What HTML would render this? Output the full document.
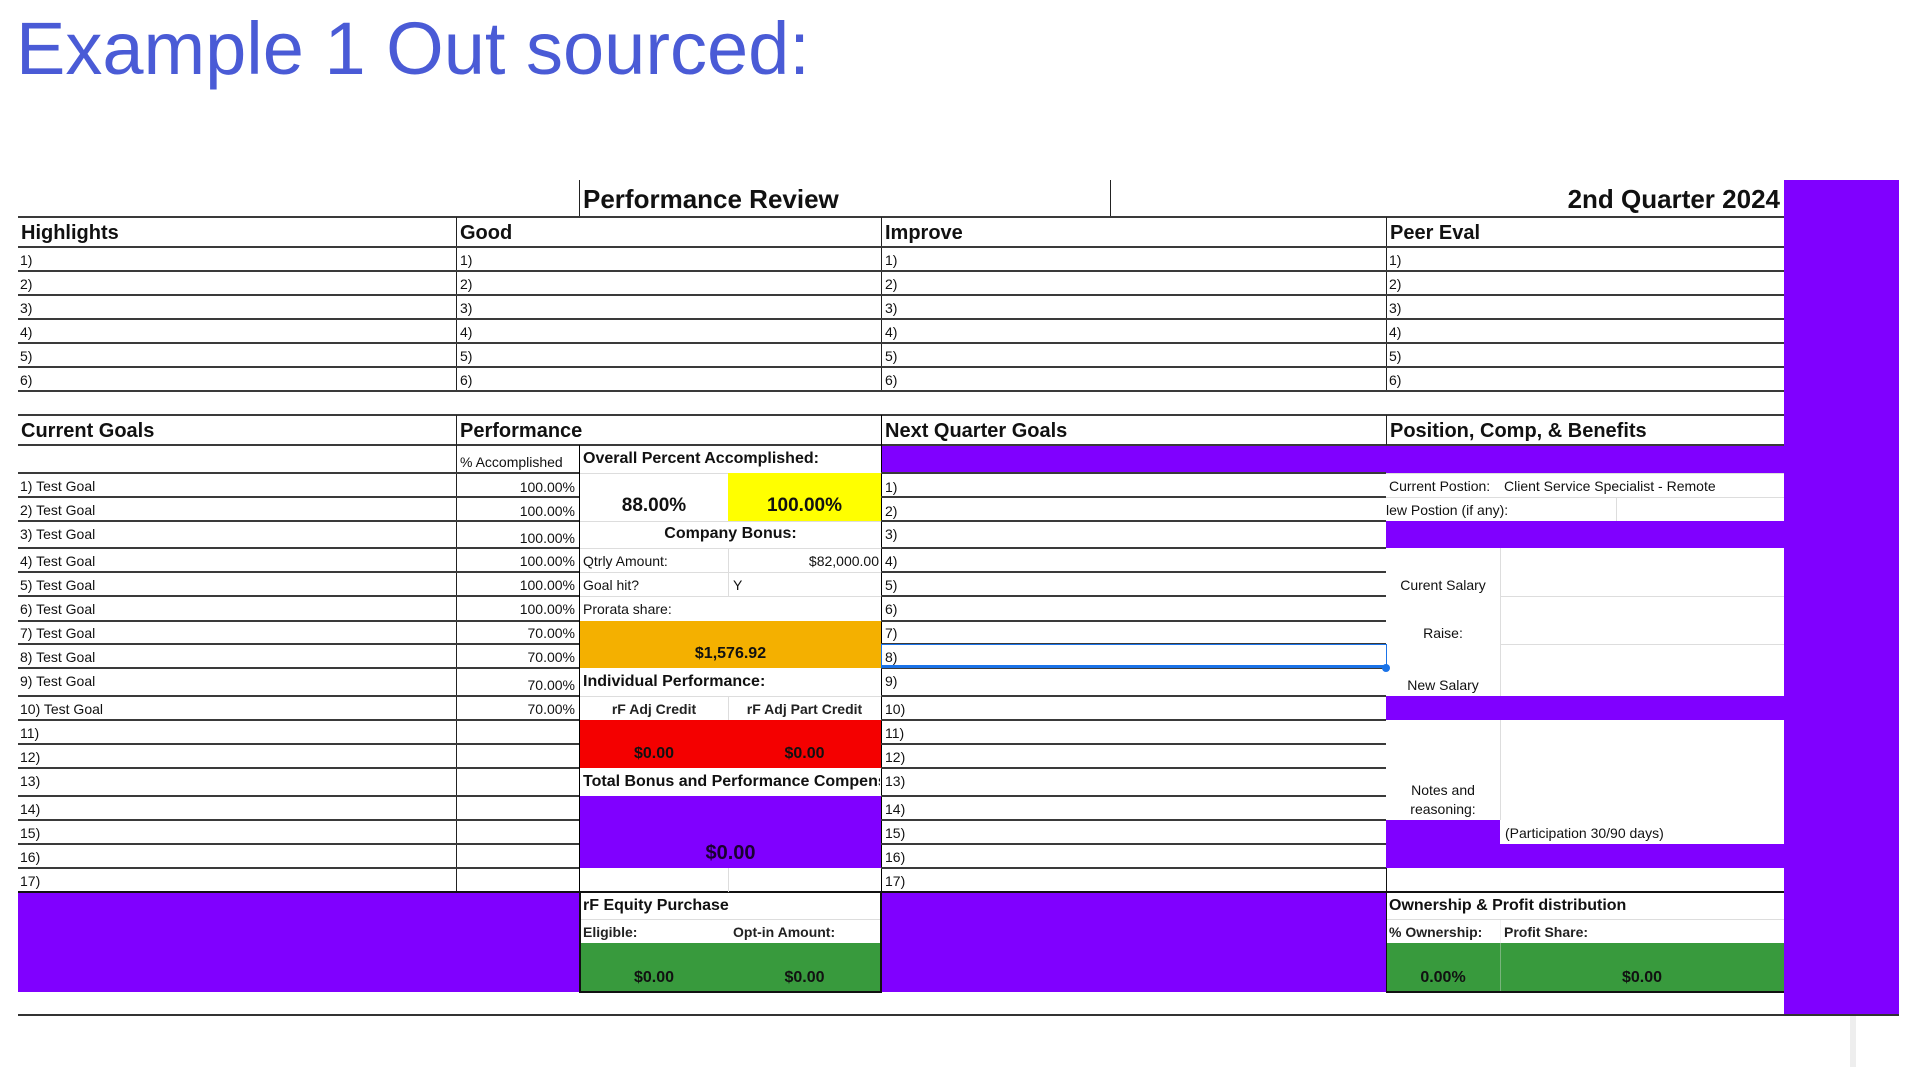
<!DOCTYPE html>
<html><head><meta charset="utf-8"><style>
*{margin:0;padding:0;box-sizing:border-box}
body{width:1922px;height:1067px;background:#fff;position:relative;overflow:hidden;font-family:"Liberation Sans",Arial,sans-serif;color:#111}
div{position:absolute}
.h{height:2px;background:#3a3a3a}
.v{width:1px;background:#222}
.g{background:#ddd}
.t{font-size:14px;white-space:nowrap;line-height:16px}
.b{font-weight:bold}
.hd{font-size:20px;font-weight:bold;white-space:nowrap}
.p{background:#8000ff}
.r{text-align:right}
.cen{text-align:center}
</style></head><body>
<div style="left:16px;top:6px;font-size:74px;color:#4a5bd6;letter-spacing:0px;white-space:nowrap">Example 1 Out sourced:</div>

<!-- purple right strip -->
<div class="p" style="left:1784px;top:180px;width:115px;height:835px"></div>
<div style="left:1850px;top:1015px;width:6px;height:52px;background:#eee"></div>

<!-- title row -->
<div class="v" style="left:579px;top:180px;height:37px"></div>
<div class="v" style="left:1110px;top:180px;height:37px"></div>
<div class="hd" style="left:583px;top:184px;font-size:26px">Performance Review</div>
<div class="hd" style="left:1380px;top:184px;width:400px;text-align:right;font-size:26px">2nd Quarter 2024</div>

<!-- highlights section -->
<div class="h" style="left:18px;top:216px;width:1766px"></div>
<div class="hd" style="left:21px;top:222px">Highlights</div>
<div class="hd" style="left:460px;top:222px">Good</div>
<div class="hd" style="left:885px;top:222px">Improve</div>
<div class="hd" style="left:1390px;top:222px">Peer Eval</div>
<div class="v" style="left:456px;top:217px;height:174px"></div>
<div class="v" style="left:881px;top:217px;height:174px"></div>
<div class="v" style="left:1386px;top:217px;height:174px"></div>
<div class="h" style="left:18px;top:246px;width:1766px"></div>
<div class="h" style="left:18px;top:270px;width:1766px"></div>
<div class="h" style="left:18px;top:294px;width:1766px"></div>
<div class="h" style="left:18px;top:318px;width:1766px"></div>
<div class="h" style="left:18px;top:342px;width:1766px"></div>
<div class="h" style="left:18px;top:366px;width:1766px"></div>
<div class="h" style="left:18px;top:390px;width:1766px"></div>
<div class="t" style="left:20px;top:252px">1)</div><div class="t" style="left:460px;top:252px">1)</div><div class="t" style="left:885px;top:252px">1)</div><div class="t" style="left:1389px;top:252px">1)</div>
<div class="t" style="left:20px;top:276px">2)</div><div class="t" style="left:460px;top:276px">2)</div><div class="t" style="left:885px;top:276px">2)</div><div class="t" style="left:1389px;top:276px">2)</div>
<div class="t" style="left:20px;top:300px">3)</div><div class="t" style="left:460px;top:300px">3)</div><div class="t" style="left:885px;top:300px">3)</div><div class="t" style="left:1389px;top:300px">3)</div>
<div class="t" style="left:20px;top:324px">4)</div><div class="t" style="left:460px;top:324px">4)</div><div class="t" style="left:885px;top:324px">4)</div><div class="t" style="left:1389px;top:324px">4)</div>
<div class="t" style="left:20px;top:348px">5)</div><div class="t" style="left:460px;top:348px">5)</div><div class="t" style="left:885px;top:348px">5)</div><div class="t" style="left:1389px;top:348px">5)</div>
<div class="t" style="left:20px;top:372px">6)</div><div class="t" style="left:460px;top:372px">6)</div><div class="t" style="left:885px;top:372px">6)</div><div class="t" style="left:1389px;top:372px">6)</div>

<!-- current goals section -->
<div class="h" style="left:18px;top:414px;width:1766px"></div>
<div class="hd" style="left:21px;top:420px">Current Goals</div>
<div class="hd" style="left:460px;top:420px">Performance</div>
<div class="hd" style="left:885px;top:420px">Next Quarter Goals</div>
<div class="hd" style="left:1390px;top:420px">Position, Comp, &amp; Benefits</div>
<div class="h" style="left:18px;top:444px;width:1766px"></div>
<div class="p" style="left:881px;top:446px;width:903px;height:27px"></div>
<div class="t" style="left:460px;top:454px;width:118px;overflow:hidden">% Accomplished</div>
<div class="t b" style="left:583px;top:451px;font-size:16px">Overall Percent Accomplished:</div>

<div class="v" style="left:456px;top:415px;height:477px"></div>
<div class="v" style="left:579px;top:445px;height:547px;background:#000"></div>
<div class="v" style="left:881px;top:415px;height:577px;background:#000"></div>
<div class="v" style="left:1386px;top:415px;height:30px"></div>

<div class="h" style="left:18px;top:472px;width:561px"></div><div class="h" style="left:881px;top:472px;width:505px"></div>
<div class="h" style="left:18px;top:496px;width:561px"></div><div class="h" style="left:881px;top:496px;width:505px"></div>
<div class="h" style="left:18px;top:520px;width:561px"></div><div class="h" style="left:881px;top:520px;width:505px"></div>
<div class="h" style="left:18px;top:547px;width:561px"></div><div class="h" style="left:881px;top:547px;width:505px"></div>
<div class="h" style="left:18px;top:571px;width:561px"></div><div class="h" style="left:881px;top:571px;width:505px"></div>
<div class="h" style="left:18px;top:595px;width:561px"></div><div class="h" style="left:881px;top:595px;width:505px"></div>
<div class="h" style="left:18px;top:620px;width:561px"></div><div class="h" style="left:881px;top:620px;width:505px"></div>
<div class="h" style="left:18px;top:643px;width:561px"></div><div class="h" style="left:881px;top:643px;width:505px"></div>
<div class="h" style="left:18px;top:667px;width:561px"></div><div class="h" style="left:881px;top:667px;width:505px"></div>
<div class="h" style="left:18px;top:695px;width:561px"></div><div class="h" style="left:881px;top:695px;width:505px"></div>
<div class="h" style="left:18px;top:719px;width:561px"></div><div class="h" style="left:881px;top:719px;width:505px"></div>
<div class="h" style="left:18px;top:743px;width:561px"></div><div class="h" style="left:881px;top:743px;width:505px"></div>
<div class="h" style="left:18px;top:767px;width:561px"></div><div class="h" style="left:881px;top:767px;width:505px"></div>
<div class="h" style="left:18px;top:795px;width:561px"></div><div class="h" style="left:881px;top:795px;width:505px"></div>
<div class="h" style="left:18px;top:819px;width:561px"></div><div class="h" style="left:881px;top:819px;width:505px"></div>
<div class="h" style="left:18px;top:843px;width:561px"></div><div class="h" style="left:881px;top:843px;width:505px"></div>
<div class="h" style="left:18px;top:867px;width:561px"></div><div class="h" style="left:881px;top:867px;width:505px"></div>
<div class="h" style="left:18px;top:891px;width:1766px;background:#111"></div>

<div class="t" style="left:20px;top:478px">1) Test Goal</div><div class="t r" style="left:460px;top:479px;width:115px">100.00%</div><div class="t" style="left:885px;top:479px">1)</div>
<div class="t" style="left:20px;top:502px">2) Test Goal</div><div class="t r" style="left:460px;top:503px;width:115px">100.00%</div><div class="t" style="left:885px;top:503px">2)</div>
<div class="t" style="left:20px;top:526px">3) Test Goal</div><div class="t r" style="left:460px;top:530px;width:115px">100.00%</div><div class="t" style="left:885px;top:526px">3)</div>
<div class="t" style="left:20px;top:553px">4) Test Goal</div><div class="t r" style="left:460px;top:553px;width:115px">100.00%</div><div class="t" style="left:885px;top:553px">4)</div>
<div class="t" style="left:20px;top:577px">5) Test Goal</div><div class="t r" style="left:460px;top:577px;width:115px">100.00%</div><div class="t" style="left:885px;top:577px">5)</div>
<div class="t" style="left:20px;top:601px">6) Test Goal</div><div class="t r" style="left:460px;top:601px;width:115px">100.00%</div><div class="t" style="left:885px;top:601px">6)</div>
<div class="t" style="left:20px;top:625px">7) Test Goal</div><div class="t r" style="left:460px;top:625px;width:115px">70.00%</div><div class="t" style="left:885px;top:625px">7)</div>
<div class="t" style="left:20px;top:649px">8) Test Goal</div><div class="t r" style="left:460px;top:649px;width:115px">70.00%</div><div class="t" style="left:885px;top:649px">8)</div>
<div class="t" style="left:20px;top:673px">9) Test Goal</div><div class="t r" style="left:460px;top:677px;width:115px">70.00%</div><div class="t" style="left:885px;top:673px">9)</div>
<div class="t" style="left:20px;top:701px">10) Test Goal</div><div class="t r" style="left:460px;top:701px;width:115px">70.00%</div><div class="t" style="left:885px;top:701px">10)</div>
<div class="t" style="left:20px;top:725px">11)</div><div class="t" style="left:885px;top:725px">11)</div>
<div class="t" style="left:20px;top:749px">12)</div><div class="t" style="left:885px;top:749px">12)</div>
<div class="t" style="left:20px;top:773px">13)</div><div class="t" style="left:885px;top:773px">13)</div>
<div class="t" style="left:20px;top:801px">14)</div><div class="t" style="left:885px;top:801px">14)</div>
<div class="t" style="left:20px;top:825px">15)</div><div class="t" style="left:885px;top:825px">15)</div>
<div class="t" style="left:20px;top:849px">16)</div><div class="t" style="left:885px;top:849px">16)</div>
<div class="t" style="left:20px;top:873px">17)</div><div class="t" style="left:885px;top:873px">17)</div>

<div style="left:881px;top:644px;width:506px;height:24px;border:1px solid #1a73e8;border-bottom:3px solid #1a73e8"></div>
<div style="left:1382px;top:664px;width:8px;height:8px;border-radius:50%;background:#1a73e8"></div>

<div style="left:580px;top:473px;width:301px;height:395px;background:#fff"></div>
<div class="g" style="left:580px;top:473px;width:301px;height:1px"></div>
<div class="t b cen" style="left:580px;top:495px;width:148px;font-size:19px;line-height:22px">88.00%</div>
<div style="left:728px;top:473px;width:153px;height:48px;background:#ffff00"></div>
<div class="t b cen" style="left:728px;top:495px;width:153px;font-size:19px;line-height:22px">100.00%</div>
<div class="g" style="left:580px;top:521px;width:301px;height:1px"></div>
<div class="t b cen" style="left:580px;top:526px;width:301px;font-size:16px">Company Bonus:</div>
<div class="g" style="left:580px;top:548px;width:301px;height:1px"></div>
<div class="g" style="left:728px;top:548px;width:1px;height:48px"></div>
<div class="t" style="left:583px;top:553px">Qtrly Amount:</div>
<div class="t r" style="left:728px;top:553px;width:151px">$82,000.00</div>
<div class="g" style="left:580px;top:572px;width:301px;height:1px"></div>
<div class="t" style="left:583px;top:577px">Goal hit?</div>
<div class="t" style="left:733px;top:577px">Y</div>
<div class="g" style="left:580px;top:596px;width:301px;height:1px"></div>
<div class="t" style="left:583px;top:601px">Prorata share:</div>
<div style="left:580px;top:621px;width:301px;height:47px;background:#f4b000"></div>
<div class="t b cen" style="left:580px;top:646px;width:301px;font-size:16px">$1,576.92</div>
<div class="t b" style="left:583px;top:674px;font-size:16px">Individual Performance:</div>
<div class="g" style="left:580px;top:696px;width:301px;height:1px"></div>
<div class="g" style="left:728px;top:696px;width:1px;height:24px"></div>
<div class="t cen" style="left:580px;top:701px;width:148px;font-weight:bold;color:#222">rF Adj Credit</div>
<div class="t cen" style="left:728px;top:701px;width:153px;font-weight:bold;color:#222">rF Adj Part Credit</div>
<div style="left:580px;top:720px;width:301px;height:48px;background:#f40000"></div>
<div class="t b cen" style="left:580px;top:746px;width:148px;font-size:16px">$0.00</div>
<div class="t b cen" style="left:728px;top:746px;width:153px;font-size:16px">$0.00</div>
<div class="t b" style="left:583px;top:774px;font-size:16px;width:297px;overflow:hidden">Total Bonus and Performance Compensation</div>
<div class="p" style="left:580px;top:796px;width:301px;height:72px"></div>
<div class="t b cen" style="left:580px;top:842px;width:301px;font-size:20px;line-height:22px;color:#1a0030">$0.00</div>
<div class="g" style="left:728px;top:868px;width:1px;height:24px"></div>

<div class="p" style="left:18px;top:893px;width:561px;height:99px"></div>
<div class="p" style="left:881px;top:893px;width:505px;height:99px"></div>

<div style="left:579px;top:892px;width:303px;height:101px;border:2px solid #111;border-top:none"></div>
<div class="t b" style="left:583px;top:898px;font-size:16px">rF Equity Purchase</div>
<div class="g" style="left:581px;top:919px;width:299px;height:1px"></div>
<div class="t" style="left:583px;top:924px;font-weight:bold;color:#222">Eligible:</div>
<div class="t" style="left:733px;top:924px;font-weight:bold;color:#222">Opt-in Amount:</div>
<div style="left:581px;top:943px;width:299px;height:48px;background:#389a3d"></div>
<div class="t b cen" style="left:580px;top:970px;width:148px;font-size:16px">$0.00</div>
<div class="t b cen" style="left:728px;top:970px;width:153px;font-size:16px">$0.00</div>

<div class="g" style="left:1386px;top:473px;width:398px;height:1px"></div>
<div class="t" style="left:1389px;top:478px">Current Postion:</div>
<div class="t" style="left:1504px;top:478px">Client Service Specialist - Remote</div>
<div class="g" style="left:1386px;top:497px;width:398px;height:1px"></div>
<div class="t" style="left:1386px;top:502px;width:228px;overflow:hidden">lew Postion (if any):</div>
<div class="g" style="left:1616px;top:497px;width:1px;height:24px"></div>
<div class="p" style="left:1386px;top:521px;width:398px;height:27px"></div>
<div class="g" style="left:1500px;top:548px;width:1px;height:148px"></div>
<div class="t cen" style="left:1386px;top:577px;width:114px">Curent Salary</div>
<div class="g" style="left:1500px;top:596px;width:284px;height:1px"></div>
<div class="t cen" style="left:1386px;top:625px;width:114px">Raise:</div>
<div class="g" style="left:1500px;top:644px;width:284px;height:1px"></div>
<div class="t cen" style="left:1386px;top:677px;width:114px">New Salary</div>
<div class="p" style="left:1386px;top:696px;width:398px;height:24px"></div>
<div class="g" style="left:1500px;top:720px;width:1px;height:100px"></div>
<div class="t cen" style="left:1386px;top:781px;width:114px;line-height:19px;white-space:normal">Notes and<br>reasoning:</div>
<div class="p" style="left:1386px;top:820px;width:114px;height:24px"></div>
<div class="t" style="left:1505px;top:825px">(Participation 30/90 days)</div>
<div class="p" style="left:1386px;top:844px;width:398px;height:24px"></div>
<div class="v" style="left:1386px;top:868px;height:125px;background:#111"></div>
<div class="t b" style="left:1389px;top:898px;font-size:16px">Ownership &amp; Profit distribution</div>
<div class="g" style="left:1387px;top:919px;width:397px;height:1px"></div>
<div class="t" style="left:1389px;top:924px;font-weight:bold;color:#222">% Ownership:</div>
<div class="t" style="left:1504px;top:924px;font-weight:bold;color:#222">Profit Share:</div>
<div style="left:1387px;top:943px;width:397px;height:48px;background:#389a3d"></div>
<div class="g" style="left:1500px;top:919px;width:1px;height:72px;opacity:.4"></div>
<div class="t b cen" style="left:1386px;top:970px;width:114px;font-size:16px">0.00%</div>
<div class="t b cen" style="left:1500px;top:970px;width:284px;font-size:16px">$0.00</div>
<div style="left:1386px;top:991px;width:398px;height:2px;background:#111"></div>

<div class="h" style="left:18px;top:1014px;width:1881px;background:#333"></div>
</body></html>
